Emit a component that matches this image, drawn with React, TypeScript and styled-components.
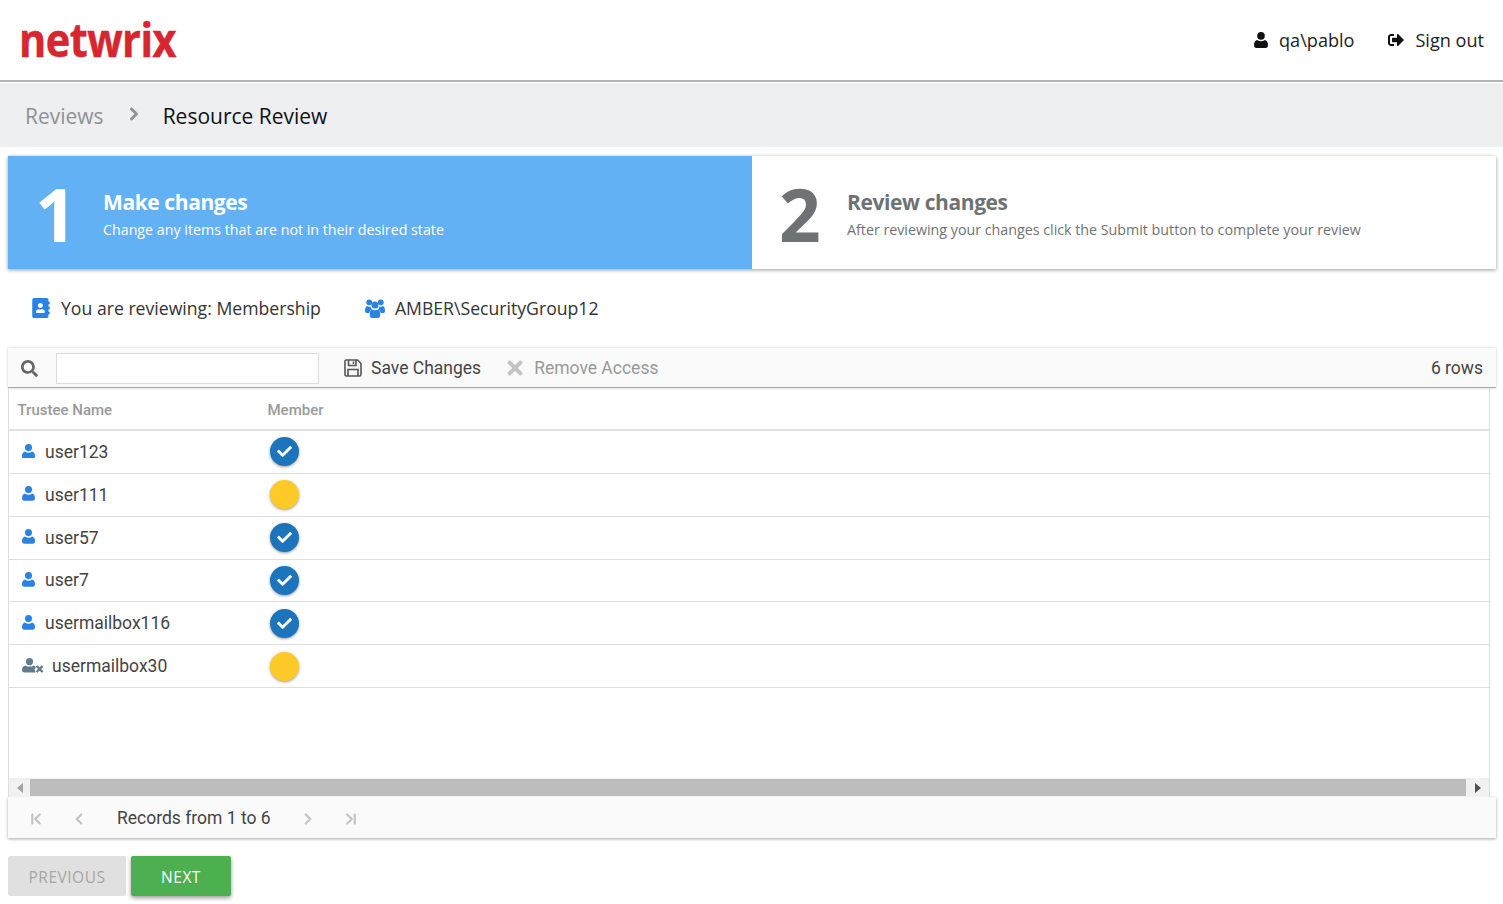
import React from "react";
import styled, { createGlobalStyle } from "styled-components";
import { FaSignOutAlt, FaAddressBook, FaSearch, FaTimes, FaCheck } from "react-icons/fa";
import { ChevronRight, ChevronLeft, ChevronFirst, ChevronLast } from "lucide-react";

const Global = createGlobalStyle`
  html, body { margin: 0; padding: 0; background: #fff; }
  body { font-family: "Roboto", "Liberation Sans", sans-serif; color: #333; overflow: hidden; }
  * { box-sizing: border-box; }
`;
const segoe = `"Open Sans", "Noto Sans", sans-serif`;

const UserIcon = ({ size = 14 }: { size?: number }) => (
  <svg width={size} height={(size * 16) / 14} viewBox="0 0 14 16" fill="currentColor">
    <circle cx="7" cy="3.9" r="3.8" />
    <path d="M3 8 Q7 10.6 11 8 Q14 9 14 13 Q14 16 11.5 16 H2.5 Q0 16 0 13 Q0 9 3 8Z" />
  </svg>
);
const GoneUserIcon = () => (
  <svg width="22" height="15" viewBox="0 0 22 15" fill="currentColor">
    <circle cx="7.5" cy="3.6" r="3.6" />
    <path d="M3.2 7.4 Q7.5 9.8 11.8 7.4 Q13.4 8 13.8 9 L12.6 11.5 L13.6 14.6 H2.5 Q0 14.6 0 12.2 Q0 8.4 3.2 7.4Z" />
    <path d="M14.6 8 L20.6 14 M20.6 8 L14.6 14" stroke="currentColor" strokeWidth="2.4" fill="none" />
  </svg>
);
const UsersIcon = () => (
  <svg width="20" height="19" viewBox="0 0 20 19" fill="currentColor">
    <circle cx="4.2" cy="3.3" r="2.9" />
    <circle cx="15.8" cy="3.3" r="2.9" />
    <circle cx="10" cy="6" r="3.5" />
    <path d="M2 7 Q4 8.2 5.6 7.4 Q5.7 9.5 7 10.6 Q4.6 11.2 4.2 14 H1.5 Q0 14 0 12 Q0 8 2 7Z" />
    <path d="M18 7 Q16 8.2 14.4 7.4 Q14.3 9.5 13 10.6 Q15.4 11.2 15.8 14 H18.5 Q20 14 20 12 Q20 8 18 7Z" />
    <path d="M7 10.4 Q10 12 13 10.4 Q15.2 11 15.2 15.5 Q15.2 19 13 19 H7 Q4.8 19 4.8 15.5 Q4.8 11 7 10.4Z" />
  </svg>
);
const SaveIcon = () => (
  <svg width="18" height="18" viewBox="0 0 18 18" fill="none" stroke="currentColor" strokeWidth="1.6">
    <path d="M1.5 1 H13.5 L17 4.5 V15.5 Q17 17 15.5 17 H2.5 Q1 17 1 15.5 V2 Q1 1 2 1Z" />
    <path d="M4.5 1 V6.5 H12 V1 M9.5 2.5 V5" />
    <path d="M4 17 V10.5 H14 V17" />
  </svg>
);

const Page = styled.div`width: 1503px; height: 904px; display: flex; flex-direction: column;`;
const Header = styled.header`
  height: 82px; flex: none; display: flex; align-items: center; justify-content: space-between;
  padding: 0 19px 0 19px; border-bottom: 2px solid #b4b4b4; background: #fff;
`;
const Logo = styled.div`
  font-family: "Open Sans", sans-serif; font-weight: 700; font-size: 46px; line-height: 1;
  letter-spacing: -0.55px; color: #d7262f; margin-top: -3px; -webkit-text-stroke: 0.5px #d7262f;
  transform: scaleX(0.9); transform-origin: left center;
`;
const UserBar = styled.div`display: flex; align-items: center; gap: 34px; font-family: ${segoe}; font-size: 18.1px; color: #1c1c1c;`;
const UserItem = styled.span`display: inline-flex; align-items: center; gap: 11px; svg { color: #111; font-size: 16px; }`;
const Crumbs = styled.nav`
  margin-top: 1px; height: 64px; flex: none; background: #edeff1; display: flex; align-items: center;
  padding: 2px 0 0 25px; font-family: ${segoe}; font-size: 21px;
`;
const CrumbLink = styled.span`color: #8f9295;`;
const CrumbSep = styled.span`display: inline-flex; color: #8f9295; margin: -4px 19px 0 20px;`;
const CrumbCurrent = styled.span`color: #111;`;
const Steps = styled.section`
  margin: 9px 7px 0 8px; height: 113px; flex: none; display: flex; background: #fff;
  box-shadow: 0 1px 4px rgba(0,0,0,.4);
`;
const Step = styled.div<{ $active?: boolean }>`
  width: ${p => (p.$active ? "744px" : "auto")}; flex: ${p => (p.$active ? "none" : "1")};
  display: flex; align-items: center; font-family: ${segoe};
  background: ${p => (p.$active ? "#63b1f5" : "#fff")}; color: ${p => (p.$active ? "#fff" : "#6f7275")};
  padding-left: 27px;
`;
const StepNum = styled.div`
  width: 68px; font-size: 73px; font-weight: 700; line-height: 1; flex: none; margin-top: 2px;
`;
const StepText = styled.div`display: flex; flex-direction: column; gap: 3px; margin-top: 2px;`;
const StepTitle = styled.div`font-size: 21px; font-weight: 700; letter-spacing: -0.4px; line-height: 29px;`;
const StepDesc = styled.div`font-size: 14.25px; line-height: 20px;`;
const Info = styled.div`
  height: 78px; flex: none; display: flex; align-items: center; padding-left: 31px; gap: 44px;
  font-family: ${segoe}; font-size: 17.65px; color: #333;
`;
const InfoItem = styled.span`display: inline-flex; align-items: center; gap: 10px; svg { color: #2a83e4; font-size: 20px; }`;
const Toolbar = styled.div`
  margin: 1px 7px 0 8px; height: 40px; flex: none; display: flex; align-items: center; background: #fafafa;
  border-bottom: 1px solid #aaa; box-shadow: 0 0 3px rgba(0,0,0,.2); padding: 1px 13px 0 13px; font-size: 17.5px; color: #444;
`;
const SearchIcon = styled.span`display: inline-flex; color: #666; font-size: 17px; width: 35px;`;
const SearchInput = styled.input`
  width: 263px; height: 31px; border: 1px solid #ddd; background: #fff; margin-right: 25px; outline: none;
`;
const ToolButton = styled.span<{ $disabled?: boolean }>`
  display: inline-flex; align-items: center; gap: ${p => (p.$disabled ? "8px" : "9px")}; margin-right: 23px;
  color: ${p => (p.$disabled ? "#999" : "#444")}; svg { color: ${p => (p.$disabled ? "#c4c4c4" : "#555")}; font-size: 22px; }
`;
const RowCount = styled.span`margin-left: auto;`;
const Table = styled.div`
  margin: 0 13px 0 8px; height: 409px; flex: none; border-left: 1px solid #ddd; border-right: 1px solid #ddd;
  display: flex; flex-direction: column; position: relative;
`;
const HeadRow = styled.div`
  height: 43px; flex: none; display: grid; grid-template-columns: 250px 1fr; align-items: center;
  border-bottom: 2px solid #e2e2e2; padding: 3px 0 0 8.5px; font-size: 15px; font-weight: 500; color: #9a9a9a;
`;
const Row = styled.div`
  height: 42.85px; flex: none; display: grid; grid-template-columns: 248px 1fr; align-items: center;
  border-bottom: 1px solid #dedede; padding-left: 13px; font-size: 17.5px; color: #444;
`;
const Name = styled.span<{ $gone?: boolean }>`
  display: inline-flex; align-items: center; gap: ${p => (p.$gone ? "8px" : "10px")};
  svg { color: ${p => (p.$gone ? "#5f7d8e" : "#2a83e4")}; flex: none; margin-top: -2px; }
`;
const Status = styled.span<{ $ok: boolean }>`
  width: 29px; height: 29px; border-radius: 50%; display: flex; align-items: center; justify-content: center;
  background: ${p => (p.$ok ? "#1c75bc" : "#ffc928")}; color: #fff; font-size: 15px; box-shadow: 0 1px 3px rgba(0,0,0,.4);
`;
const Scrollbar = styled.div`
  position: absolute; left: 0; right: 0; bottom: 0; height: 19px; background: #f1f1f1; display: flex; align-items: center;
`;
const ScrollArrow = styled.span<{ $dir: "l" | "r" }>`
  width: ${p => (p.$dir === "l" ? "21px" : "23px")}; flex: none; display: flex; justify-content: center;
  &::before { content: ""; border-style: solid; border-width: 5px 0; border-color: transparent;
    ${p => (p.$dir === "l" ? "border-right: 6px solid #a3a3a3;" : "border-left: 6px solid #505050;")} }
`;
const ScrollThumb = styled.div`flex: 1; height: 17px; background: #bdbdbd;`;
const Pager = styled.div`
  margin: 0 7px 0 8px; height: 41px; flex: none; display: flex; align-items: center; background: #fafafa;
  box-shadow: 0 1px 3px rgba(0,0,0,.35); padding-left: 19px; font-size: 17.5px; color: #444;
`;
const PagerIcon = styled.span`display: inline-flex; width: 18px; justify-content: center; color: #c4c4c4; margin-top: 2px;`;
const PagerText = styled.span`margin: 0 28px 0 29px; white-space: nowrap;`;
const PagerGap = styled.span<{ $w: number }>`width: ${p => p.$w}px; flex: none;`;
const Actions = styled.div`display: flex; gap: 5px; padding: 18px 0 0 8px;`;
const Button = styled.button<{ $primary?: boolean }>`
  height: 40px; width: ${p => (p.$primary ? "100px" : "118px")}; border: 0; border-radius: 2px; padding-top: 3px;
  font-family: ${segoe}; font-size: 15.5px; letter-spacing: .5px;
  background: ${p => (p.$primary ? "#4caf50" : "#e0e0e0")}; color: ${p => (p.$primary ? "#fff" : "#a6a6a6")};
  box-shadow: ${p => (p.$primary ? "0 2px 4px rgba(0,0,0,.4)" : "none")};
`;

const rows = [
  { name: "user123", ok: true }, { name: "user111", ok: false }, { name: "user57", ok: true },
  { name: "user7", ok: true }, { name: "usermailbox116", ok: true }, { name: "usermailbox30", ok: false, gone: true },
];

export default function App() {
  return (
    <Page>
      <Global />
      <Header>
        <Logo>netwrix</Logo>
        <UserBar>
          <UserItem><UserIcon />qa\pablo</UserItem>
          <UserItem><FaSignOutAlt />Sign out</UserItem>
        </UserBar>
      </Header>
      <Crumbs>
        <CrumbLink>Reviews</CrumbLink>
        <CrumbSep><ChevronRight size={20} strokeWidth={3.5} /></CrumbSep>
        <CrumbCurrent>Resource Review</CrumbCurrent>
      </Crumbs>
      <Steps>
        <Step $active>
          <StepNum>1</StepNum>
          <StepText>
            <StepTitle>Make changes</StepTitle>
            <StepDesc>Change any items that are not in their desired state</StepDesc>
          </StepText>
        </Step>
        <Step>
          <StepNum>2</StepNum>
          <StepText>
            <StepTitle>Review changes</StepTitle>
            <StepDesc>After reviewing your changes click the Submit button to complete your review</StepDesc>
          </StepText>
        </Step>
      </Steps>
      <Info>
        <InfoItem><FaAddressBook />You are reviewing: Membership</InfoItem>
        <InfoItem><UsersIcon />AMBER\SecurityGroup12</InfoItem>
      </Info>
      <Toolbar>
        <SearchIcon><FaSearch /></SearchIcon>
        <SearchInput />
        <ToolButton><SaveIcon />Save Changes</ToolButton>
        <ToolButton $disabled><FaTimes />Remove Access</ToolButton>
        <RowCount>6 rows</RowCount>
      </Toolbar>
      <Table>
        <HeadRow><span>Trustee Name</span><span>Member</span></HeadRow>
        {rows.map(r => (
          <Row key={r.name}>
            <Name $gone={r.gone}>{r.gone ? <GoneUserIcon /> : <UserIcon size={13} />}{r.name}</Name>
            <Status $ok={r.ok}>{r.ok && <FaCheck />}</Status>
          </Row>
        ))}
        <Scrollbar>
          <ScrollArrow $dir="l" />
          <ScrollThumb />
          <ScrollArrow $dir="r" />
        </Scrollbar>
      </Table>
      <Pager>
        <PagerIcon><ChevronFirst size={18} strokeWidth={3} /></PagerIcon>
        <PagerGap $w={25} />
        <PagerIcon><ChevronLeft size={18} strokeWidth={3} /></PagerIcon>
        <PagerText>Records from 1 to 6</PagerText>
        <PagerIcon><ChevronRight size={18} strokeWidth={3} /></PagerIcon>
        <PagerGap $w={25} />
        <PagerIcon><ChevronLast size={18} strokeWidth={3} /></PagerIcon>
      </Pager>
      <Actions>
        <Button disabled>PREVIOUS</Button>
        <Button $primary>NEXT</Button>
      </Actions>
    </Page>
  );
}
